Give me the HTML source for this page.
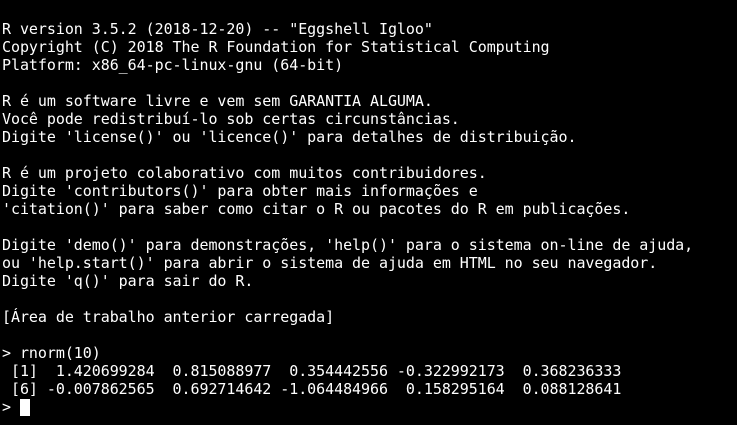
<!DOCTYPE html>
<html><head><meta charset="utf-8"><style>
html,body{margin:0;padding:0;background:#000;width:737px;height:425px;overflow:hidden}
pre{margin:0;padding:20px 0 0 2px;font-family:"DejaVu Sans Mono",monospace;font-size:15px;line-height:18px;color:#fff;white-space:pre;letter-spacing:-0.055px}
.c{display:inline-block;width:10px;height:17px;background:#fff;vertical-align:-4px;margin-left:0}
</style></head><body><pre>R version 3.5.2 (2018-12-20) -- "Eggshell Igloo"
Copyright (C) 2018 The R Foundation for Statistical Computing
Platform: x86_64-pc-linux-gnu (64-bit)

R é um software livre e vem sem GARANTIA ALGUMA.
Você pode redistribuí-lo sob certas circunstâncias.
Digite 'license()' ou 'licence()' para detalhes de distribuição.

R é um projeto colaborativo com muitos contribuidores.
Digite 'contributors()' para obter mais informações e
'citation()' para saber como citar o R ou pacotes do R em publicações.

Digite 'demo()' para demonstrações, 'help()' para o sistema on-line de ajuda,
ou 'help.start()' para abrir o sistema de ajuda em HTML no seu navegador.
Digite 'q()' para sair do R.

[Área de trabalho anterior carregada]

&gt; rnorm(10)
 [1]  1.420699284  0.815088977  0.354442556 -0.322992173  0.368236333
 [6] -0.007862565  0.692714642 -1.064484966  0.158295164  0.088128641
&gt; <span class="c"></span></pre></body></html>
